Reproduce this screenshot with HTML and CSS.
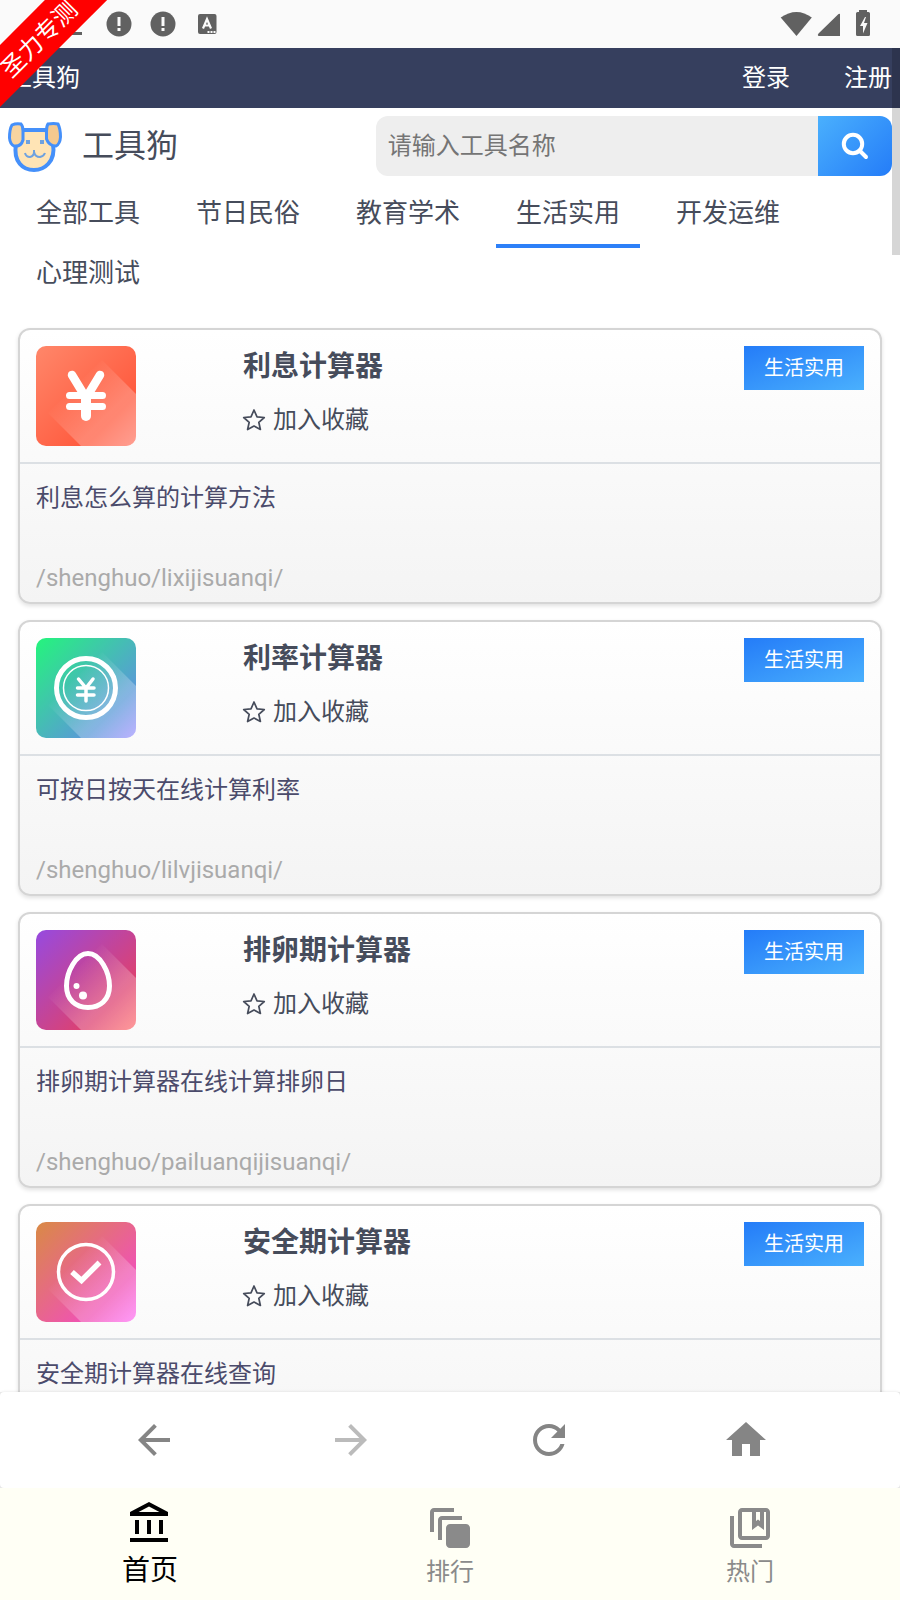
FILE: index.html
```html
<!DOCTYPE html>
<html lang="zh-CN">
<head>
<meta charset="utf-8">
<meta name="viewport" content="width=device-width, initial-scale=1">
<title>工具狗</title>
<link rel="stylesheet" href="styles.css">
</head>
<body>
<div class="app">
  <div class="status">
    <svg class="status-left" viewBox="0 0 220 48" width="220" height="48" fill="#616161">
      <path d="M58 32h24v3H58z"/>
      <circle cx="119" cy="24" r="12.500"/><circle cx="163" cy="24" r="12.500"/>
      <path d="M117.500 17h3v9h-3zM117.500 28h3v3h-3zM161.500 17h3v9h-3zM161.500 28h3v3h-3z" fill="#fafafa"/>
      <rect x="198" y="14" width="18.500" height="20" rx="2"/>
      <path d="M203 28.500l4-9.500 4 9.500M204.500 25.500h5" fill="none" stroke="#fafafa" stroke-width="2.200"/>
      <path d="M207.500 31h2v2h-2zM210.500 31h2v2h-2zM213.500 31h2v2h-2z" fill="#fafafa"/>
    </svg>
    <svg class="status-right" viewBox="0 0 100 48" width="100" height="48" fill="#616161">
      <path d="M-19.300 17.500C-9 10 2 10 11.800 17.500L-3.500 36z"/>
      <path d="M40 14v22H18.500q-1.500-1 0-2.500L38 14.500q1-1 2-.5z"/>
      <path d="M59 12v-2h8v2h1.500q1.500 0 1.500 1.500v21q0 1.500-1.500 1.500h-11q-1.500 0-1.500-1.500v-21q0-1.500 1.500-1.500z"/>
      <path d="M65 17l-5 9h3v7.500l4.500-10.500h-3.500l2-6z" fill="#fafafa"/>
    </svg>
  </div>

  <main class="page">
    <nav class="topbar">
      <a class="topbar-home" href="#">工具狗</a>
      <a href="#">登录</a>
      <a href="#">注册</a>
    </nav>
    <header class="header">
      <a class="brand" href="#">
        <svg class="brand-logo" viewBox="0 0 54 50" width="54" height="50">
          <path d="M15 8H38L45 22C48 40 36 48 26 48C15 48 5 40 8 22Z" fill="#ffe4b5" stroke="#4590fa" stroke-width="4"/>
          <path d="M4 3Q8 1 13 2Q15 4 15 9V18Q13 25 6 24Q2 22 1.500 16Q1.500 7 4 3Z" fill="#f7d4a0" stroke="#4590fa" stroke-width="3"/>
          <path d="M40 2Q46 1 50 2Q52.500 7 52.500 15Q52 22 48 24Q41 24 38.500 17V9Q38.500 4 40 2Z" fill="#f5c98f" stroke="#4590fa" stroke-width="3"/>
          <path d="M18 18h4v4h-4zM32 18h4v4h-4z" fill="#6ea1df"/>
          <path d="M26 28V31M17 31Q18 35 22 35Q26 34 26 30Q27 35 32 35Q36 34 37 31" fill="none" stroke="#6ea1df" stroke-width="2"/>
        </svg>
        <span>工具狗</span>
      </a>
      <form class="search">
        <input class="search-input" type="text" placeholder="请输入工具名称" aria-label="请输入工具名称">
        <button class="search-button" type="button" aria-label="搜索">
          <svg viewBox="0 0 28 28" width="28" height="28" fill="none" stroke="#fff" stroke-width="4"><circle cx="12" cy="12" r="9.200"/><path d="M18.500 18.500L25 25" stroke-linecap="round"/></svg>
        </button>
      </form>
    </header>
    <nav class="tabs">
      <a class="tab" href="#">全部工具</a>
      <a class="tab" href="#">节日民俗</a>
      <a class="tab" href="#">教育学术</a>
      <a class="tab tab-active" href="#">生活实用</a>
      <a class="tab" href="#">开发运维</a>
      <a class="tab" href="#">心理测试</a>
    </nav>

    <section class="cards">
      <article class="card">
        <div class="card-head">
          <div class="thumb thumb-interest">
            <svg viewBox="0 0 100 100" width="100" height="100" fill="none" stroke="#fff" stroke-linecap="round">
              <path d="M36 29L50 52L64 29" stroke-width="8.500" stroke-linejoin="round"/><path d="M50 50V70" stroke-width="10"/><path d="M33.500 49.500H66.500M33.500 60.500H66.500" stroke-width="7"/>
            </svg>
          </div>
          <div class="info">
            <h2 class="card-title">利息计算器</h2>
            <button class="fav" type="button"><svg viewBox="0 0 22 22" width="22" height="22"><path d="M11 1L14 7.800L21.300 8.500L15.800 13.300L17.400 20.500L11 17L4.600 20.500L6.200 13.300L.7 8.500L8 7.800Z"/></svg>加入收藏</button>
          </div>
          <span class="tag">生活实用</span>
        </div>
        <div class="card-body"><p class="desc">利息怎么算的计算方法</p><p class="url">/shenghuo/lixijisuanqi/</p></div>
      </article>

      <article class="card">
        <div class="card-head">
          <div class="thumb thumb-rate">
            <svg viewBox="0 0 100 100" width="100" height="100" fill="none" stroke="#fff" stroke-linecap="round">
              <circle cx="50" cy="50" r="29.500" stroke-width="5"/><circle cx="50" cy="50" r="22.500" stroke-width="1.500"/>
              <path d="M42.500 41L50 50L57 41M50 50V63M41.500 50H58M41.500 57H58" stroke-width="3.500"/>
            </svg>
          </div>
          <div class="info">
            <h2 class="card-title">利率计算器</h2>
            <button class="fav" type="button"><svg viewBox="0 0 22 22" width="22" height="22"><path d="M11 1L14 7.800L21.300 8.500L15.800 13.300L17.400 20.500L11 17L4.600 20.500L6.200 13.300L.7 8.500L8 7.800Z"/></svg>加入收藏</button>
          </div>
          <span class="tag">生活实用</span>
        </div>
        <div class="card-body"><p class="desc">可按日按天在线计算利率</p><p class="url">/shenghuo/lilvjisuanqi/</p></div>
      </article>

      <article class="card">
        <div class="card-head">
          <div class="thumb thumb-egg">
            <svg viewBox="0 0 100 100" width="100" height="100" fill="#fff">
              <path d="M52 23.500C64 23.500 73.500 42 73.500 56C73.500 70 64 77.500 52 77.500C40 77.500 30.500 70 30.500 56C30.500 42 40 23.500 52 23.500Z" fill="none" stroke="#fff" stroke-width="5"/>
              <circle cx="40.500" cy="56" r="3"/><circle cx="47" cy="65.500" r="4"/>
            </svg>
          </div>
          <div class="info">
            <h2 class="card-title">排卵期计算器</h2>
            <button class="fav" type="button"><svg viewBox="0 0 22 22" width="22" height="22"><path d="M11 1L14 7.800L21.300 8.500L15.800 13.300L17.400 20.500L11 17L4.600 20.500L6.200 13.300L.7 8.500L8 7.800Z"/></svg>加入收藏</button>
          </div>
          <span class="tag">生活实用</span>
        </div>
        <div class="card-body"><p class="desc">排卵期计算器在线计算排卵日</p><p class="url">/shenghuo/pailuanqijisuanqi/</p></div>
      </article>

      <article class="card">
        <div class="card-head">
          <div class="thumb thumb-safe">
            <svg viewBox="0 0 100 100" width="100" height="100" fill="none" stroke="#fff">
              <circle cx="50" cy="50" r="27.500" stroke-width="3.500"/><path d="M36 50L45.500 58.500L63.500 40.500" stroke-width="5.500"/>
            </svg>
          </div>
          <div class="info">
            <h2 class="card-title">安全期计算器</h2>
            <button class="fav" type="button"><svg viewBox="0 0 22 22" width="22" height="22"><path d="M11 1L14 7.800L21.300 8.500L15.800 13.300L17.400 20.500L11 17L4.600 20.500L6.200 13.300L.7 8.500L8 7.800Z"/></svg>加入收藏</button>
          </div>
          <span class="tag">生活实用</span>
        </div>
        <div class="card-body"><p class="desc">安全期计算器在线查询</p></div>
      </article>
    </section>
    <div class="scroll-thumb"></div>
  </main>

  <div class="toolbar-wrap">
    <div class="toolbar">
      <button class="tool" type="button" aria-label="后退"><svg viewBox="0 0 24 24" width="48" height="48"><path d="M20 11H7.830l5.590-5.590L12 4l-8 8 8 8 1.410-1.410L7.830 13H20v-2z"/></svg></button>
      <button class="tool tool-disabled" type="button" aria-label="前进"><svg viewBox="0 0 24 24" width="48" height="48"><path d="M12 4l-1.410 1.410L16.170 11H4v2h12.170l-5.580 5.590L12 20l8-8z"/></svg></button>
      <button class="tool" type="button" aria-label="刷新"><svg viewBox="0 0 24 24" width="48" height="48"><path d="M17.650 6.350C16.200 4.900 14.210 4 12 4c-4.420 0-7.990 3.580-7.990 8s3.570 8 7.990 8c3.730 0 6.840-2.550 7.730-6h-2.080c-.82 2.330-3.040 4-5.650 4-3.310 0-6-2.690-6-6s2.690-6 6-6c1.660 0 3.140.69 4.220 1.780L13 11h7V4l-2.350 2.350z"/></svg></button>
      <button class="tool" type="button" aria-label="主页"><svg viewBox="0 0 24 24" width="48" height="48"><path d="M10 20v-6h4v6h5v-8h3L12 3 2 12h3v8z"/></svg></button>
    </div>
  </div>

  <nav class="bottom">
    <a class="bottom-item bottom-active" href="#"><svg viewBox="0 0 24 24" width="48" height="48"><path d="M6.500 10h-2v7h2v-7zm6 0h-2v7h2v-7zm8.500 9H2v2h19v-2zm-2.500-9h-2v7h2v-7zm-7-6.740L16.710 6H6.290l5.210-2.740m0-2.260L2 6v2h19V6l-9.500-5z"/></svg>首页</a>
    <a class="bottom-item" href="#"><svg viewBox="0 0 24 24" width="48" height="48"><path d="M14 2H4c-1.110 0-2 .9-2 2v10h2V4h10V2zm4 4H8c-1.110 0-2 .9-2 2v10h2V8h10V6zm2 4h-8c-1.110 0-2 .9-2 2v8c0 1.100.89 2 2 2h8c1.100 0 2-.9 2-2v-8c0-1.100-.9-2-2-2z"/></svg>排行</a>
    <a class="bottom-item" href="#"><svg viewBox="0 0 24 24" width="48" height="48"><path d="M4 6H2v14c0 1.100.9 2 2 2h14v-2H4V6z"/><path d="M20 2H8c-1.100 0-2 .9-2 2v12c0 1.100.9 2 2 2h12c1.100 0 2-.9 2-2V4c0-1.100-.9-2-2-2zm-5 2h2v4.500l-1-.75-1 .75V4zm5 12H8V4h5v9l3-2.250L19 13V4h1v12z"/></svg>热门</a>
  </nav>

  <div class="ribbon">圣力专测</div>
</div>
</body>
</html>
```

FILE: styles.css
```css
* { box-sizing: border-box; }

body {
  margin: 0;
  background: #fff;
  color: #464c5b;
  font-family: Roboto, "Noto Sans CJK SC", sans-serif;
  font-size: 24px;
}

a { color: inherit; text-decoration: none; }
button, input { font: inherit; color: inherit; border: 0; }
button { padding: 0; background: none; }
svg { display: block; flex: none; overflow: visible; }
h2, p { margin: 0; }

.app {
  position: relative;
  display: flex;
  flex-direction: column;
  height: 100vh;
  overflow: hidden;
}

.status {
  display: flex;
  justify-content: space-between;
  flex: none;
  background: #fafafa;
}

.page {
  position: relative;
  flex: 1;
  min-height: 0;
  overflow: hidden;
}

.topbar {
  display: flex;
  align-items: center;
  gap: 54px;
  height: 60px;
  padding: 0 8px 6px;
  background: #363f5e;
  color: #fff;
}
.topbar-home { margin-right: auto; }

.header {
  display: flex;
  align-items: center;
  justify-content: space-between;
  gap: 24px;
  padding: 8px 8px 0;
}
.brand {
  display: flex;
  align-items: center;
  gap: 20px;
  padding-top: 2px;
  font-size: 32px;
  line-height: 40px;
}
.brand span { padding-bottom: 2px; }
.brand-logo { overflow: hidden; }
.search {
  display: flex;
  width: 58.4%;
  height: 60px;
  overflow: hidden;
  border-radius: 12px;
}
.search-input {
  flex: 1;
  min-width: 0;
  padding: 0 12px;
  background: #eee;
  outline: 0;
}
.search-input::placeholder { color: #757575; opacity: 1; }
.search-button {
  display: flex;
  align-items: center;
  justify-content: center;
  width: 74px;
  background: linear-gradient(135deg, #4ab0fd, #247cf8);
}

.tabs {
  display: flex;
  flex-wrap: wrap;
  column-gap: 16px;
  padding: 12px 16px 0;
  font-size: 26px;
}
.tab {
  height: 60px;
  padding: 0 20px;
  border-bottom: 4px solid transparent;
  line-height: 50px;
}
.tab-active { border-color: #2d80f8; }

.cards {
  display: flex;
  flex-direction: column;
  gap: 16px;
  padding: 20px 18px;
}
.card {
  border: 2px solid #d5d5d5;
  border-radius: 12px;
  background: linear-gradient(#fff, #f4f4f4);
  box-shadow: 0 2px 4px rgba(0, 0, 0, 0.12);
}
.card-head {
  display: flex;
  align-items: flex-start;
  padding: 16px;
  border-bottom: 2px solid #dce0e4;
}
.info { flex: 1; }
.card-title {
  font-size: 28px;
  line-height: 42px;
}
.fav {
  display: flex;
  align-items: center;
  gap: 8px;
  margin-top: 14px;
  line-height: 36px;
}
.fav svg { fill: none; stroke: #464c5b; stroke-width: 1.7; stroke-linejoin: round; }
.tag {
  padding: 0 20px;
  background: linear-gradient(160deg, #247cf8, #4ab0fd);
  color: #fff;
  font-size: 20px;
  line-height: 44px;
}
.card-body {
  display: flex;
  flex-direction: column;
  justify-content: space-between;
  height: 138px;
  padding: 16px 16px 6px;
}
.desc { color: #4b4b6b; line-height: 36px; }
.url { color: #aaa; line-height: 36px; }

/* Thumbnails: a pale diagonal shadow band over a two-colour gradient. */
.thumb {
  position: relative;
  width: 100px;
  height: 100px;
  margin-right: 107px;
  border-radius: 10px;
  overflow: hidden;
}
.thumb svg { position: relative; }
.thumb::before {
  content: "";
  position: absolute;
  inset: 0;
  background: linear-gradient(135deg, rgba(255, 255, 255, 0) 38%, rgba(255, 255, 255, 0.25) 70%, rgba(255, 255, 255, 0.35));
  clip-path: polygon(66% 14%, 100% 48%, 100% 100%, 45% 100%, 12% 67%);
}
.thumb-interest { background: linear-gradient(135deg, #ff876a, #ff5a3e 75%, #ff6a56); }
.thumb-rate { background: linear-gradient(135deg, #24f57c, #5a99d8 75%, #9688ff); }
.thumb-egg { background: linear-gradient(135deg, #964ae0, #de416f 75%, #ff6262); }
.thumb-safe { background: linear-gradient(135deg, #d98a45, #f052b5 75%, #ff62f4); }

.scroll-thumb {
  position: absolute;
  top: 0;
  right: 0;
  width: 8px;
  height: 207px;
  background: rgba(0, 0, 0, 0.16);
}

.toolbar-wrap {
  position: relative;
  flex: none;
  background: #eee;
}
.toolbar {
  display: flex;
  padding: 24px 55px;
  border-radius: 4px;
  background: #fff;
  box-shadow: 0 0 3px rgba(0, 0, 0, 0.12);
}
.tool { flex: 1; display: flex; justify-content: center; }
.tool svg { fill: #858585; }
.tool-disabled svg { fill: #bbb; }

.bottom {
  position: relative;
  display: flex;
  flex: none;
  height: 112px;
  background: #fffff5;
  color: #8a8a8a;
}
.bottom-item {
  flex: 1;
  display: flex;
  flex-direction: column;
  align-items: center;
  padding-top: 16px;
  line-height: 40px;
}
.bottom-item svg { fill: currentColor; }
.bottom-active { padding-top: 12px; color: #000; font-size: 28px; line-height: 46px; }

.ribbon {
  position: absolute;
  top: 16px;
  left: -62px;
  width: 200px;
  padding-top: 4px;
  background: #f00;
  color: #fff;
  line-height: 40px;
  text-align: center;
  transform: rotate(-45deg);
}
```
